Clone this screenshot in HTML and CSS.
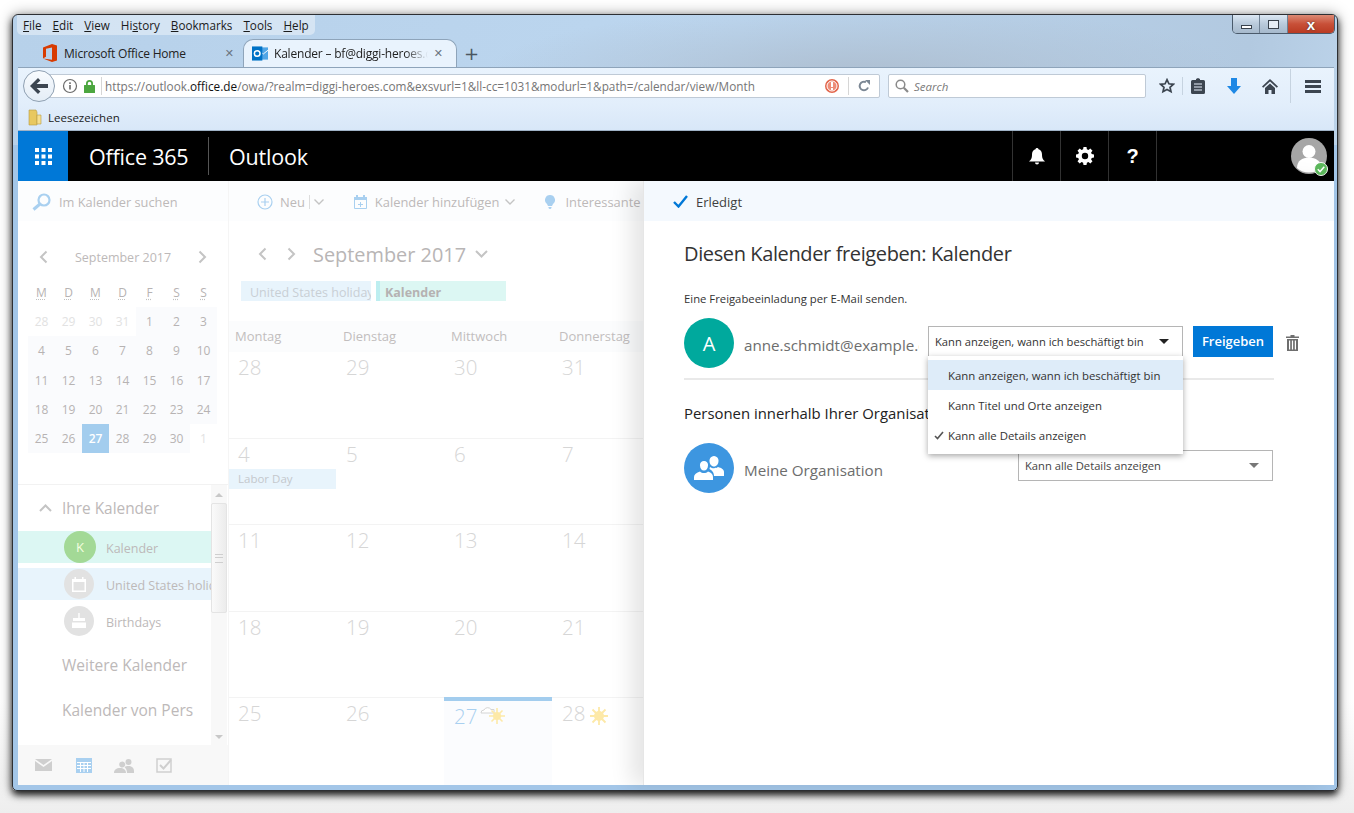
FILE: index.html
```html
<!DOCTYPE html>
<html lang="de">
<head>
  <meta charset="UTF-8" />
  <title>Kalender - Outlook</title>
  <link rel="stylesheet" href="styles.css">
</head>
<body>
  <div class="window">
    <div class="caption-btns">
      <div class="cap-btn cap-min"><span></span></div>
      <div class="cap-btn cap-max"><span></span></div>
      <div class="cap-btn cap-close">x</div>
    </div>

    <div class="menubar">
      <span><u>F</u>ile</span><span><u>E</u>dit</span><span><u>V</u>iew</span><span>Hi<u>s</u>tory</span><span><u>B</u>ookmarks</span><span><u>T</u>ools</span><span><u>H</u>elp</span>
    </div>

    <div class="tabstrip">
      <div class="tab">
        <svg class="tab-icon" width="14" height="18" viewBox="0 0 14 18"><path fill="#d83b01" d="M0 3.5 9 0l5 1.5v15L9 18l-9-3.5 9 1.2V3.4L3 4.7v8L0 14.5z"/></svg>
        <span class="tab-title">Microsoft Office Home</span>
        <span class="tab-x">&#10005;</span>
      </div>
      <div class="tab tab-active">
        <svg class="tab-icon" width="16" height="17" viewBox="0 0 17 17"><rect x="6" y="2" width="11" height="13" fill="#50a5e6"/><path d="M7 5l5 4 5-4" fill="none" stroke="#fff"/><rect y="1" width="11" height="15" fill="#0072c6"/><circle cx="5.5" cy="8.5" r="3" fill="none" stroke="#fff" stroke-width="1.6"/></svg>
        <span class="tab-title tab-fade">Kalender – bf@diggi-heroes.com</span>
        <span class="tab-x">&#10005;</span>
      </div>
      <span class="tab-plus">+</span>
    </div>

    <div class="navbar">
      <div class="back-btn">
        <svg width="18" height="16" viewBox="0 0 18 16"><path fill="#3c4550" d="M8 0l2.400 2.400L6.600 6H18v4H6.600l3.800 3.600L8 16 0 8z"/></svg>
      </div>
      <div class="urlbar">
        <svg class="url-info" width="16" height="16" viewBox="0 0 16 16"><circle cx="8" cy="8" r="6.5" fill="#fff" stroke="#6a6a6a" stroke-width="1.2"/><rect x="7.2" y="7" width="1.6" height="4.500" fill="#6a6a6a"/><rect x="7.2" y="4.3" width="1.6" height="1.7" fill="#6a6a6a"/></svg>
        <svg class="url-lock" width="11" height="13" viewBox="0 0 11 13"><path fill="#4ca63f" d="M2 5V3.500a3.500 3.500 0 0 1 7 0V5h1.500a.5.500 0 0 1 .5.500V12.500a.5.500 0 0 1-.5.500H.5a.5.500 0 0 1-.5-.500V5.500A.5.500 0 0 1 .5 5zM3.800 5h3.400V3.500a1.700 1.700 0 0 0-3.400 0z"/></svg>
        <span class="url-sep"></span>
        <span class="url-text">https://outlook.<b>office.de</b>/owa/?realm=diggi-heroes.com&amp;exsvurl=1&amp;ll-cc=1031&amp;modurl=1&amp;path=/calendar/view/Month</span>
        <svg class="url-warn" width="14" height="14" viewBox="0 0 14 14"><circle cx="7" cy="7" r="7" fill="#e2664c"/><circle cx="7" cy="7" r="5" fill="#ee8d78" stroke="#fff" stroke-width="1"/><rect x="6" y="3" width="2" height="5" fill="#fff"/><rect x="6" y="9" width="2" height="2" fill="#fff"/></svg>
        <span class="url-sep url-sep-2"></span>
        <svg class="url-reload" width="12" height="12" viewBox="0 0 12 12"><path fill="none" stroke="#7b8794" stroke-width="2" d="M10 7.500A4.300 4.300 0 1 1 8 2.200"/><path fill="#7b8794" d="M7 0l5 0v5z"/></svg>
      </div>
      <div class="searchbar">
        <svg width="14" height="14" viewBox="0 0 14 14"><circle cx="5.5" cy="5.5" r="4.3" fill="none" stroke="#8a8a8a" stroke-width="1.5"/><path d="M8.800 8.800 13 13" stroke="#8a8a8a" stroke-width="2.2"/></svg>
        <span>Search</span>
      </div>
      <div class="nav-icons">
        <svg class="ni-star" width="16" height="16" viewBox="0 0 16 16"><path fill="none" stroke="#3c4550" stroke-width="1.7" d="M8 1.700l1.900 4.100 4.500.5-3.400 3 1 4.400L8 11.500l-4 2.200 1-4.400-3.400-3 4.500-.5z"/></svg>
        <span class="ni-sep"></span>
        <svg class="ni-clip" width="14" height="16" viewBox="0 0 14 16"><path fill="#3c4550" d="M1.500 2H5V1l2-1 2 1v1h3.500A1.500 1.500 0 0 1 14 3.500v11a1.500 1.500 0 0 1-1.500 1.500h-11A1.500 1.500 0 0 1 0 14.500v-11A1.500 1.500 0 0 1 1.500 2z"/><path stroke="#e6f0fb" stroke-width="1.2" d="M3 6h8M3 9h8M3 12h8"/></svg>
        <svg class="ni-down" width="14" height="16" viewBox="0 0 14 16"><path fill="#1e88e5" d="M4 0h6v8h4l-7 8-7-8h4z"/></svg>
        <svg class="ni-home" width="16" height="15" viewBox="0 0 16 15"><path fill="#3c4550" d="M8 0l8 7.500-1.200 1.200L8 2.400 1.200 8.700 0 7.500zM3 9l5-4.600L13 9v6H9.500v-4h-3v4H3z"/></svg>
        <span class="ni-sep ni-sep-2"></span>
        <svg class="ni-burger" width="16" height="13" viewBox="0 0 16 13"><path stroke="#3c4550" stroke-width="3" d="M0 1.500h16M0 6.500h16M0 11.500h16"/></svg>
      </div>
    </div>

    <div class="bookmarks">
      <svg width="14" height="17" viewBox="0 0 14 17"><path fill="#e8c860" stroke="#b59a45" stroke-width=".6" d="M1 1h7l1 2v13H1z"/><path fill="#f7df8f" stroke="#b59a45" stroke-width=".6" d="M9 6h4v9H9z"/></svg>
      <span>Leesezeichen</span>
    </div>

    <div class="o365bar">
      <div class="waffle">
        <svg width="17" height="17" viewBox="0 0 17 17" fill="#fff"><rect width="4" height="4"/><rect x="6.5" width="4" height="4"/><rect x="13" width="4" height="4"/><rect y="6.5" width="4" height="4"/><rect x="6.5" y="6.5" width="4" height="4"/><rect x="13" y="6.5" width="4" height="4"/><rect y="13" width="4" height="4"/><rect x="6.5" y="13" width="4" height="4"/><rect x="13" y="13" width="4" height="4"/></svg>
      </div>
      <div class="brand">Office 365</div>
      <div class="brand brand-app">Outlook</div>
      <div class="bar-btn bar-btn-first">
        <svg width="16" height="17" viewBox="0 0 16 17"><path fill="#fff" d="M8 0a1.500 1.500 0 0 1 1.500 1.300C12 2 13 4 13 6.500c0 4 1 5 3 7H0c2-2 3-3 3-7C3 4 4 2 6.500 1.300A1.500 1.500 0 0 1 8 0zM6 14.500h4a2 2 0 0 1-4 0z"/></svg>
      </div>
      <div class="bar-btn">
        <svg width="18" height="18" viewBox="0 0 18 18"><path fill="#fff" fill-rule="evenodd" d="M7.500 0h3l.4 2.300 1.500.6L14.300 1.500l2.200 2.200-1.400 1.900.6 1.500L18 7.500v3l-2.300.4-.6 1.500 1.400 1.900-2.200 2.200-1.900-1.400-1.500.6L10.500 18h-3l-.4-2.300-1.500-.6-1.900 1.400-2.200-2.200 1.400-1.900-.6-1.500L0 10.500v-3l2.300-.4.6-1.500L1.500 3.700 3.700 1.500l1.900 1.400 1.500-.6zM9 5.800a3.200 3.200 0 1 0 0 6.400 3.200 3.200 0 0 0 0-6.400z"/></svg>
      </div>
      <div class="bar-btn bar-help">?</div>
      <div class="bar-btn bar-btn-empty"></div>
      <div class="me-photo">
        <svg width="36" height="36" viewBox="0 0 36 36"><circle cx="18" cy="18" r="18" fill="#a6a6a6"/><circle cx="18" cy="13.5" r="6.5" fill="#fff"/><path fill="#fff" d="M6 30c0-7 5-10.500 12-10.500S30 23 30 30a18 18 0 0 1-24 0z"/></svg>
        <svg class="me-status" width="14" height="14" viewBox="0 0 15 15"><circle cx="7.5" cy="7.5" r="7" fill="#5cb85c" stroke="#fff"/><path d="M4 7.800l2.500 2.500L11 5.200" fill="none" stroke="#fff" stroke-width="1.6"/></svg>
      </div>
    </div>

    <div class="app">
      <div class="leftpane">
        <div class="search-row">
          <svg width="19" height="18" viewBox="0 0 19 18"><circle cx="12" cy="7" r="5.5" fill="none" stroke="#a9d0f0" stroke-width="2.2"/><path d="M8 11 1.500 16.500" stroke="#a9d0f0" stroke-width="3"/></svg>
          <span>Im Kalender suchen</span>
        </div>
        <div class="mini-head">
          <svg class="chev" width="10" height="14" viewBox="0 0 10 14"><path d="M8.500 1.500 3 7l5.500 5.500" fill="none" stroke="#c4c4c4" stroke-width="2"/></svg>
          <span>September 2017</span>
          <svg class="chev" width="10" height="14" viewBox="0 0 10 14"><path d="M1.500 1.500 7 7l-5.500 5.500" fill="none" stroke="#c4c4c4" stroke-width="2"/></svg>
        </div>
        <div class="mini-grid">
          <abbr>M</abbr><abbr>D</abbr><abbr>M</abbr><abbr>D</abbr><abbr>F</abbr><abbr>S</abbr><abbr>S</abbr>
          <span class="off">28</span><span class="off">29</span><span class="off">30</span><span class="off">31</span><span class="in">1</span><span class="in">2</span><span class="in">3</span>
          <span class="in">4</span><span class="in">5</span><span class="in">6</span><span class="in">7</span><span class="in">8</span><span class="in">9</span><span class="in">10</span>
          <span class="in">11</span><span class="in">12</span><span class="in">13</span><span class="in">14</span><span class="in">15</span><span class="in">16</span><span class="in">17</span>
          <span class="in">18</span><span class="in">19</span><span class="in">20</span><span class="in">21</span><span class="in">22</span><span class="in">23</span><span class="in">24</span>
          <span class="in">25</span><span class="in">26</span><span class="today">27</span><span class="in">28</span><span class="in">29</span><span class="in">30</span><span class="off">1</span>
        </div>
        <div class="folders">
          <div class="folder-list">
            <div class="group-head">
              <svg width="13" height="8" viewBox="0 0 13 8"><path d="M1 7l5.500-5.500L12 7" fill="none" stroke="#c4c4c4" stroke-width="2"/></svg>
              <span>Ihre Kalender</span>
            </div>
            <div class="cal-row cal-row-green">
              <span class="cal-dot dot-green">K</span><span class="cal-name">Kalender</span>
            </div>
            <div class="cal-row cal-row-blue">
              <span class="cal-dot">
                <svg width="14" height="15" viewBox="0 0 14 15"><path fill="#fff" d="M0 2h2.500V0h1.500v2h6V0h1.500v2H14v13H0zM1.500 5v8.500h11V5z"/></svg>
              </span><span class="cal-name">United States holidays</span>
            </div>
            <div class="cal-row">
              <span class="cal-dot">
                <svg width="16" height="16" viewBox="0 0 16 16"><path fill="#fff" d="M7.300 0h1.400v5H14v3H2V5h5.300zM1 9.500h14V15H1z"/></svg>
              </span><span class="cal-name">Birthdays</span>
            </div>
            <div class="group-more">Weitere Kalender</div>
            <div class="group-more">Kalender von Pers</div>
          </div>
          <div class="scrollbar">
            <span class="sb-up"></span>
            <div class="sb-thumb"></div>
            <span class="sb-down"></span>
          </div>
        </div>
        <div class="modules">
          <svg width="17" height="12" viewBox="0 0 17 12"><path fill="#cfcfcf" d="M0 0h17L8.500 6zM0 2l8.500 6L17 2v10H0z"/></svg>
          <svg width="16" height="15" viewBox="0 0 16 15"><path fill="#a9d0f0" d="M0 0h16v15H0z"/><path stroke="#fff" d="M1 4.500h14M1 7.500h14M1 10.500h14M4.500 4v10M8 4v10M11.500 4v10"/></svg>
          <svg width="20" height="15" viewBox="0 0 20 15"><path fill="#cfcfcf" d="M6.500 4a3 3 0 1 1 0 5 3 3 0 0 1 0-5zM0 15c0-3.500 2.500-5 6-5s6 1.500 6 5zM14.500 1a3 3 0 1 1 0 6 3 3 0 0 1 0-6zM13 15c0-3-1-4.500-2.500-6 1-.8 2.500-1 4-1 3 0 5.500 1.500 5.500 5v2z"/></svg>
          <svg width="16" height="15" viewBox="0 0 16 15"><path fill="none" stroke="#cfcfcf" stroke-width="1.5" d="M1 1h14v13H1z"/><path fill="none" stroke="#cfcfcf" stroke-width="2" d="M4 7l3.500 3.500L15 2"/></svg>
        </div>
      </div>

      <div class="calendar">
        <div class="cal-toolbar">
          <svg class="tb-plus" width="16" height="16" viewBox="0 0 16 16"><circle cx="8" cy="8" r="7" fill="none" stroke="#a9d0f0" stroke-width="1.2"/><path d="M8 4v8M4 8h8" stroke="#a9d0f0" stroke-width="1.2"/></svg>
          <span class="tb-new">Neu</span><span class="tb-pipe"></span>
          <svg class="tb-chev" width="10" height="6" viewBox="0 0 10 6"><path d="M.5.500 5 5 9.500.5" fill="none" stroke="#c4c4c4" stroke-width="1.4"/></svg>
          <svg class="tb-cal" width="13" height="14" viewBox="0 0 13 14"><path fill="none" stroke="#a9d0f0" d="M.5 2.500h12v11H.5z"/><path fill="#a9d0f0" d="M0 2h13v3H0zM2 0h2v2H2zM9 0h2v2H9z"/><path stroke="#a9d0f0" d="M6.500 7v5M4 9.500h5"/></svg>
          <span class="tb-add">Kalender hinzufügen</span>
          <svg class="tb-chev" width="10" height="6" viewBox="0 0 10 6"><path d="M.5.500 5 5 9.500.5" fill="none" stroke="#c4c4c4" stroke-width="1.4"/></svg>
          <svg class="tb-bulb" width="10" height="14" viewBox="0 0 10 14"><path fill="#a9d0f0" d="M5 0a5 5 0 0 1 3 9l-1 2H3L2 9a5 5 0 0 1 3-9zM3.500 12h3v1l-1 1h-1l-1-1z"/></svg>
          <span class="tb-more">Interessante</span>
        </div>
        <div class="cal-head">
          <svg class="chev" width="10" height="14" viewBox="0 0 10 14"><path d="M8.500 1.500 3 7l5.500 5.500" fill="none" stroke="#c4c4c4" stroke-width="2"/></svg>
          <svg class="chev" width="10" height="14" viewBox="0 0 10 14"><path d="M1.500 1.500 7 7l-5.500 5.500" fill="none" stroke="#c4c4c4" stroke-width="2"/></svg>
          <span class="cal-title">September 2017</span>
          <svg width="13" height="8" viewBox="0 0 13 8"><path d="M1 1l5.500 5.500L12 1" fill="none" stroke="#c4c4c4" stroke-width="2"/></svg>
        </div>
        <div class="legend">
          <span class="legend-item leg-blue">United States holiday</span>
          <span class="legend-item leg-green">Kalender</span>
        </div>
        <div class="weekdays">
          <span>Montag</span><span>Dienstag</span><span>Mittwoch</span><span>Donnerstag</span>
        </div>
        <div class="weeks">
          <div class="day">28</div><div class="day">29</div><div class="day">30</div><div class="day">31</div>
          <div class="day">4<span class="chip">Labor Day</span></div><div class="day">5</div><div class="day">6</div><div class="day">7</div>
          <div class="day">11</div><div class="day">12</div><div class="day">13</div><div class="day">14</div>
          <div class="day">18</div><div class="day">19</div><div class="day">20</div><div class="day">21</div>
          <div class="day">25</div><div class="day">26</div>
          <div class="day day-today">27
            <svg class="wx" width="26" height="20" viewBox="0 0 26 20"><path fill="#fff" stroke="#d4d4d4" d="M1 7a3 3 0 0 1 3-3 4 4 0 0 1 7-.500h3V7z"/><circle cx="17" cy="10" r="4" fill="#fde9a8"/><path stroke="#fde9a8" stroke-width="1.6" d="M17 2v16M9 10h16M11.500 4.500l11 11M22.500 4.500l-11 11"/></svg>
          </div>
          <div class="day">28
            <svg class="wx wx-sun" width="20" height="20" viewBox="0 0 20 20"><circle cx="10" cy="10" r="5" fill="#fde9a8"/><path stroke="#fde9a8" stroke-width="1.8" d="M10 1v18M1 10h18M3.500 3.500l13 13M16.500 3.500l-13 13"/></svg>
          </div>
        </div>
      </div>

      <div class="panel">
        <div class="panel-bar">
          <svg width="15" height="13" viewBox="0 0 15 13"><path d="M1 7l4.500 4.500L14 1" fill="none" stroke="#0078d7" stroke-width="2.4"/></svg>
          <span>Erledigt</span>
        </div>
        <div class="panel-body">
          <h1>Diesen Kalender freigeben: Kalender</h1>
          <p class="invite">Eine Freigabeeinladung per E-Mail senden.</p>
          <div class="share-row">
            <span class="persona persona-teal">A</span>
            <span class="persona-name">anne.schmidt@example.com</span>
            <div class="dropdown">
              <span>Kann anzeigen, wann ich beschäftigt bin</span>
              <i class="caret caret-dark"></i>
              <div class="menu">
                <div class="menu-item menu-item-hover">Kann anzeigen, wann ich beschäftigt bin</div>
                <div class="menu-item">Kann Titel und Orte anzeigen</div>
                <div class="menu-item menu-item-checked">
                  <svg width="10" height="9" viewBox="0 0 10 9"><path d="M1 5l2.500 2.500L9 1" fill="none" stroke="#555" stroke-width="1.6"/></svg>
                  Kann alle Details anzeigen
                </div>
              </div>
            </div>
            <button class="share-btn">Freigeben</button>
            <svg class="trash" width="13" height="16" viewBox="0 0 13 16"><path fill="#6e6e6e" d="M4.500 0h4v1.500H13V3H0V1.500h4.500zM1 4h11v12H1zM3 5.500v9h1.200v-9zM5.900 5.500v9h1.200v-9zM8.800 5.500v9H10v-9z"/></svg>
          </div>
          <div class="divider"></div>
          <h2>Personen innerhalb Ihrer Organisation</h2>
          <div class="org-row">
            <span class="persona persona-blue">
              <svg width="30" height="24" viewBox="0 0 30 24"><path fill="#fff" d="M20 0a4.500 4.500 0 0 1 4.500 5c0 3-2 5.500-4.500 5.500S15.500 8 15.500 5A4.500 4.500 0 0 1 20 0zM10 5a4 4 0 0 1 4 4.500c0 3-1.800 5-4 5s-4-2-4-5A4 4 0 0 1 10 5zM16 11c1.200 1 2.500 1.200 4 1.200s3-.400 4-1.200c3.500 1 6 2.500 6 5v4H20c0-3-1-5-4.500-7zM6 15.500c1 1 2.500 1.500 4 1.500s3-.500 4-1.500c3.500 1 5 3 5 5.500v3H0v-3c0-2.500 2.500-4.500 6-5.500z"/></svg>
            </span>
            <span class="persona-name org-name">Meine Organisation</span>
            <div class="dropdown dropdown-org">
              <span>Kann alle Details anzeigen</span>
              <i class="caret"></i>
            </div>
          </div>
        </div>
      </div>
    </div>
  </div>
</body>
</html>
```

FILE: styles.css
```css
* {
  box-sizing: border-box;
}
html, body {
  margin: 0;
  height: 100%;
}
body {
  background: linear-gradient(#fff 0, #fff 700px, #eee 813px);
  overflow: hidden;
  font-family: "Open Sans", "Noto Sans", sans-serif;
}
svg {
  display: block;
  flex: none;
}

/* browser window */
.window {
  position: relative;
  width: 1326px;
  height: 777px;
  margin: 14px 0 0 12px;
  padding: 0 3px 5px 5px;
  border: 1px solid #2d2f33;
  border-radius: 6px 6px 5px 5px;
  background: linear-gradient(transparent 130px, #a3c6e8 130px), radial-gradient(ellipse 380px 70px at 850px 60px, #aebfd1, rgba(174, 191, 209, 0) 100%), linear-gradient(100deg, #b7d1ea, #bcd6ef 50%, #b2c9e0 85%, #c6def4);
  box-shadow: 0 4px 7px rgba(0, 0, 0, 0.85), 0 0 14px rgba(0, 0, 0, 0.35);
}
.caption-btns {
  position: absolute;
  top: 0;
  right: 2px;
  display: flex;
  height: 19px;
  width: 103px;
  border: 1px solid #4a5a6b;
  border-top: none;
  border-radius: 0 0 5px 5px;
  overflow: hidden;
}
.cap-btn {
  display: flex;
  align-items: center;
  justify-content: center;
  width: 28px;
  border-right: 1px solid #6f8194;
  background: linear-gradient(#dbe7f3, #b9cadb 50%, #a6b9cc);
}
.cap-btn span {
  display: block;
  border: 1px solid #39424c;
}
.cap-min span {
  width: 11px;
  height: 4px;
  margin-top: 6px;
  background: #fff;
}
.cap-max span {
  width: 11px;
  height: 9px;
  background: #e6eef6;
}
.cap-close {
  width: 47px;
  border: none;
  background: linear-gradient(#dc8a75, #c85038 50%, #b93a22);
  color: #fff;
  font: bold 15px/1 "Liberation Sans", sans-serif;
  text-shadow: 0 0 2px #333;
}

/* firefox menu + tabs */
.menubar {
  display: flex;
  width: 298px;
  height: 20px;
  margin-left: -1px;
  padding-left: 6px;
  background: rgba(255, 255, 255, 0.4);
  border-radius: 0 0 5px 5px;
  font-size: 11.7px;
  line-height: 20px;
  color: #1b1b1b;
}
.menubar span {
  margin-right: 11px;
}
.tabstrip {
  display: flex;
  align-items: center;
  height: 32px;
  padding: 4px 0 0 12px;
}
.tab {
  display: flex;
  align-items: center;
  width: 213px;
  height: 28px;
  padding: 0 9px 0 13px;
  font-size: 12px;
  color: #222;
}
.tab-icon {
  margin-right: 7px;
}
.tab-title {
  flex: 1;
  white-space: nowrap;
  overflow: hidden;
  letter-spacing: -0.2px;
}
.tab-x {
  margin-left: 6px;
  font: bold 11px "DejaVu Sans", sans-serif;
  color: #6b7580;
}
.tab-active {
  width: 214px;
  margin-left: 0;
  padding: 0 13px 0 8px;
  background: #e9f3fd;
  border: 1px solid #8ea4ba;
  border-bottom: none;
  border-radius: 10px 10px 0 0;
}
.tab-active .tab-icon {
  margin-right: 6px;
}
.tab-fade {
  -webkit-mask-image: linear-gradient(90deg, #000 85%, transparent 100%);
  mask-image: linear-gradient(90deg, #000 85%, transparent 100%);
}
.tab-plus {
  margin-left: 7px;
  font: 18px "DejaVu Sans", sans-serif;
  color: #4b5661;
}

/* toolbar */
.navbar {
  display: flex;
  align-items: center;
  height: 37px;
  padding-left: 5px;
  background: linear-gradient(#e9f3fd, #e2eefb);
  border-top: 1px solid #8ea4ba;
}
.back-btn {
  position: relative;
  z-index: 1;
  display: flex;
  align-items: center;
  justify-content: center;
  width: 32px;
  height: 32px;
  margin-right: -11px;
  border: 1px solid #8fa0b2;
  border-radius: 50%;
  background: linear-gradient(#f8fbfe, #e4edf6);
}
.urlbar {
  display: flex;
  align-items: center;
  flex: 0 0 836px;
  min-width: 0;
  height: 24px;
  padding-left: 17px;
  background: #fff;
  border: 1px solid #bfcad6;
  border-radius: 0 2px 2px 0;
}
.url-lock {
  margin-left: 6px;
}
.url-sep {
  width: 1px;
  height: 18px;
  margin: 0 3px 0 6px;
  background: #d6d6d6;
}
.url-text {
  flex: 1;
  width: 0;
  font-size: 11.77px;
  color: #767676;
  white-space: nowrap;
  overflow: hidden;
}
.url-text b {
  font-weight: 400;
  color: #111;
}
.url-sep-2 {
  margin: 0 9px 0 9px;
}
.url-reload {
  margin-right: 9px;
}
.searchbar {
  display: flex;
  align-items: center;
  gap: 5px;
  width: 258px;
  height: 24px;
  margin-left: 8px;
  padding-left: 6px;
  background: #fff;
  border: 1px solid #bfcad6;
  border-radius: 2px;
  font-size: 11.5px;
  font-style: italic;
  color: #7a7a7a;
}
.nav-icons {
  display: flex;
  align-items: center;
  height: 36px;
  padding-left: 13px;
}
.ni-sep {
  width: 1px;
  height: 18px;
  margin: 0 8px 0 7px;
  background: #c6d3e0;
}
.ni-down {
  margin-left: 22px;
}
.ni-home {
  margin-left: 21px;
}
.ni-sep-2 {
  height: 34px;
  margin: 0 14px 0 12px;
}

.bookmarks {
  display: flex;
  align-items: center;
  gap: 6px;
  height: 27px;
  padding-left: 10px;
  background: linear-gradient(#e2eefb, #d8e7f8);
  border-bottom: 1px solid #9fb2c6;
  font-size: 11.5px;
  color: #1b1b1b;
}

/* office 365 header */
.o365bar {
  display: flex;
  align-items: stretch;
  height: 50px;
  background: #000;
  color: #fff;
}
.waffle {
  display: flex;
  align-items: center;
  justify-content: center;
  width: 50px;
  background: #0078d7;
}
.brand {
  display: flex;
  align-items: center;
  width: 140px;
  padding-left: 21px;
  font-size: 21.5px;
  letter-spacing: -0.2px;
  position: relative;
}
.brand-app {
  width: 804px;
  padding-left: 21px;
}
.brand-app::before {
  content: "";
  position: absolute;
  left: 0;
  top: 6px;
  bottom: 6px;
  width: 1px;
  background: #555;
}
.bar-btn {
  display: flex;
  align-items: center;
  justify-content: center;
  width: 48px;
  border-left: 1px solid #333;
}
.bar-help {
  font: bold 20px "Liberation Sans", sans-serif;
}
.bar-btn-empty {
  width: 135px;
}
.me-photo {
  position: relative;
  align-self: center;
}
.me-status {
  position: absolute;
  right: -1px;
  bottom: -2px;
}

/* faded outlook body */
.app {
  display: flex;
  height: 604px;
  background: #fff;
  color: #bdb9b9;
}
.leftpane {
  display: flex;
  flex-direction: column;
  width: 211px;
  border-right: 1px solid #f5f5f5;
}
.search-row {
  display: flex;
  align-items: center;
  gap: 8px;
  height: 40px;
  padding: 2px 0 0 14px;
  background: #fcfdfe;
  font-size: 12.8px;
}
.mini-head {
  display: flex;
  align-items: center;
  justify-content: space-between;
  height: 34px;
  margin-top: 19px;
  padding: 0 20px;
  font-size: 12.5px;
}
.mini-grid {
  display: grid;
  grid-template-columns: repeat(7, 27px);
  grid-auto-rows: 29.2px;
  margin: 4px 0 0 10px;
  font-size: 12px;
  text-align: center;
  line-height: 29px;
  color: #b7b3b3;
}
.mini-grid abbr {
  text-decoration: underline dotted #c0c0c0;
  text-underline-offset: 2px;
}
.mini-grid .in {
  background: #fafbfd;
}
.mini-grid .off {
  color: #e2e2e2;
}
.mini-grid .today {
  background: #a3cdee;
  color: #fff;
  font-weight: 600;
}
.folders {
  display: flex;
  flex: 1;
  min-height: 0;
  margin-top: 31px;
  border-top: 1px solid #f2f2f2;
}
.folder-list {
  width: 193px;
  overflow: hidden;
}
.group-head {
  display: flex;
  align-items: center;
  gap: 10px;
  height: 46px;
  padding-left: 21px;
  font-size: 15.4px;
}
.cal-row {
  display: flex;
  align-items: center;
  height: 32px;
  margin-bottom: 5px;
  padding-left: 46px;
  font-size: 12.5px;
  white-space: nowrap;
}
.cal-row-green {
  background: #dcf7f3;
}
.cal-row-blue {
  background: #e8f4fc;
}
.cal-name {
  margin: 3px 0 0 12px;
}
.cal-dot {
  display: flex;
  align-items: center;
  justify-content: center;
  flex: none;
  width: 30px;
  height: 30px;
  border-radius: 50%;
  background: #e2e2e2;
  color: #fff;
}
.dot-green {
  width: 32px;
  height: 32px;
  margin-right: -2px;
  background: #a3d996;
  color: #f5ffe0;
  font-size: 13px;
}
.group-more {
  height: 45px;
  padding-left: 44px;
  font-size: 15.5px;
  line-height: 47px;
  white-space: nowrap;
}
.scrollbar {
  position: relative;
  width: 16px;
  background: #f8f8f8;
  padding-top: 18px;
}
.sb-thumb {
  position: relative;
  height: 110px;
  border: 1px solid #e4e4e4;
  border-radius: 2px;
  background: linear-gradient(90deg, #fafafa, #ececec);
}
.sb-thumb::after {
  content: "";
  position: absolute;
  left: 3px;
  right: 3px;
  top: 50px;
  height: 7px;
  border-top: 1px solid #cfcfcf;
  border-bottom: 1px solid #cfcfcf;
  background: linear-gradient(transparent 2px, #cfcfcf 2px, #cfcfcf 3px, transparent 3px);
}
.sb-up, .sb-down {
  position: absolute;
  left: 4px;
  border: 4px solid transparent;
}
.sb-up {
  top: 4px;
  border-bottom-color: #c8c8c8;
}
.sb-down {
  bottom: 2px;
  border-top-color: #c8c8c8;
}
.modules {
  display: flex;
  align-items: center;
  gap: 22px;
  height: 40px;
  padding-left: 17px;
  background: #f8f8f8;
}
.modules svg:first-child {
  margin-right: 2px;
}

.calendar {
  flex: none;
  width: 414px;
  overflow: hidden;
}
.cal-toolbar {
  display: flex;
  align-items: center;
  height: 40px;
  padding: 1px 0 0 28px;
  background: #fcfdfe;
  font-size: 12.9px;
  white-space: nowrap;
}
.tb-new {
  margin-left: 7px;
}
.tb-pipe {
  width: 1px;
  height: 14px;
  margin: 0 4px;
  background: #dddddd;
}
.tb-cal {
  margin-left: 30px;
}
.tb-add {
  margin: 0 6px 0 8px;
}
.tb-bulb {
  margin-left: 30px;
}
.tb-more {
  margin-left: 10px;
}
.cal-head {
  display: flex;
  align-items: center;
  height: 40px;
  margin-top: 13px;
  padding-left: 28px;
  font-size: 19.9px;
}
.cal-head .chev {
  margin-right: 20px;
}
.cal-title {
  margin: 0 9px 0 -4px;
  color: #b8b5b5;
}
.legend {
  display: flex;
  gap: 5px;
  height: 20px;
  margin: 7px 0 0 12px;
  font-size: 12.5px;
  line-height: 24px;
}
.legend-item {
  width: 130px;
  overflow: hidden;
  white-space: nowrap;
  padding-left: 9px;
}
.leg-blue {
  background: #e8f4fc;
  color: #c8cfd5;
}
.leg-green {
  background: #dcf7f3;
  border-left: 4px solid #bdeef0;
  padding-left: 5px;
  font-weight: 700;
  color: #b5b2b2;
}
.weekdays {
  display: grid;
  grid-template-columns: repeat(4, 108px);
  height: 31px;
  margin-top: 20px;
  padding-left: 6px;
  background: #fbfcfd;
  font-size: 13px;
  line-height: 30px;
  color: #c2bebe;
}
.weeks {
  display: grid;
  grid-template-columns: repeat(4, 108px);
  grid-auto-rows: 86.5px;
  margin-left: -1px;
}
.day {
  position: relative;
  padding: 1px 0 0 10px;
  border-bottom: 1px solid #f3f3f3;
  font-size: 20.5px;
  font-weight: 300;
  color: #d6d6d6;
}
.day:nth-last-child(-n+4) {
  border-bottom: none;
}
.chip {
  position: absolute;
  top: 30px;
  left: 1px;
  width: 107px;
  height: 20px;
  padding-left: 9px;
  background: #e8f4fc;
  font-size: 11.5px;
  font-weight: 400;
  line-height: 20px;
  color: #c4c8cc;
}
.day-today {
  background: #fbfcfe;
  border-top: 4px solid #a3cdee;
  margin-top: -1px;
  color: #a9d0f0;
}
.wx {
  position: absolute;
  top: 5px;
  left: 36px;
}
.wx-sun {
  top: 8px;
  left: 37px;
}

/* share panel */
.panel {
  position: relative;
  flex: 1;
  min-width: 0;
  border-left: 1px solid #e6e6e6;
  box-shadow: -12px 0 20px rgba(0, 0, 0, 0.1);
  background: #fff;
}
.panel-bar {
  display: flex;
  align-items: center;
  gap: 8px;
  height: 40px;
  padding: 1px 0 0 29px;
  background: #f4f9fe;
  font-size: 13px;
  color: #3f3f3f;
}
.panel-body {
  padding: 19px 0 0 40px;
}
.panel-body h1 {
  margin: 0;
  font-size: 20px;
  font-weight: 400;
  line-height: 28px;
  color: #333;
  letter-spacing: -0.38px;
}
.invite {
  margin: 23px 0 0;
  font-size: 11.3px;
  line-height: 16px;
  color: #333;
}
.share-row {
  display: flex;
  align-items: center;
  height: 50px;
  margin-top: 11px;
}
.persona {
  display: flex;
  align-items: center;
  justify-content: center;
  flex: none;
  width: 50px;
  height: 50px;
  border-radius: 50%;
  color: #fff;
  font-size: 20px;
}
.persona-teal {
  background: #00a99d;
}
.persona-blue {
  background: #3d96e0;
}
.persona-name {
  display: block;
  width: 175px;
  margin: 4px 0 0 10px;
  overflow: hidden;
  font-size: 15.2px;
  color: #6d6d6d;
  white-space: nowrap;
}
.dropdown {
  position: relative;
  display: flex;
  align-items: center;
  justify-content: space-between;
  flex: none;
  width: 255px;
  height: 31px;
  margin: -4px 0 0 9px;
  padding: 0 13px 0 6px;
  border: 1px solid #b5b5b5;
  font-size: 11.2px;
  color: #333;
  white-space: nowrap;
}
.caret {
  width: 0;
  height: 0;
  border: 5px solid transparent;
  border-top: 5px solid #777;
  border-bottom: none;
}
.caret-dark {
  border-top-color: #222;
}
.menu {
  position: absolute;
  top: 29px;
  left: -1px;
  z-index: 5;
  width: 255px;
  height: 98px;
  padding-top: 4px;
  background: #fff;
  box-shadow: 0 2px 6px rgba(0, 0, 0, 0.35);
  font-size: 11.4px;
}
.menu-item {
  position: relative;
  height: 30px;
  padding-left: 20px;
  line-height: 31px;
}
.menu-item-hover {
  background: #deecf9;
}
.menu-item svg {
  position: absolute;
  left: 6px;
  top: 11px;
}
.share-btn {
  flex: none;
  width: 80px;
  height: 31px;
  margin: -4px 0 0 10px;
  border: none;
  background: #0078d7;
  color: #fff;
  font: 600 13px "Open Sans", sans-serif;
}
.trash {
  margin-left: 13px;
}
.divider {
  width: 590px;
  height: 2px;
  margin-top: 10px;
  background: #e9e9e9;
}
.panel-body h2 {
  margin: 23px 0 0;
  font-size: 14.9px;
  font-weight: 400;
  line-height: 20px;
  color: #222;
  white-space: nowrap;
}
.org-row {
  display: flex;
  align-items: center;
  height: 50px;
  margin-top: 20px;
}
.org-name {
  width: 264px;
}
.dropdown-org {
  margin: -5px 0 0 10px;
  color: #444;
}
```
